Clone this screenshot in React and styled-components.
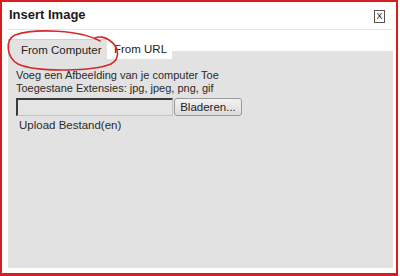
import React from "react";
import styled, { createGlobalStyle } from "styled-components";

const Global = createGlobalStyle`
  html, body { margin: 0; padding: 0; background: #ffffff; }
  body { font-family: "Liberation Sans", Arial, sans-serif; }
`;

const Frame = styled.div`
  position: relative;
  box-sizing: border-box;
  width: 398px;
  height: 276px;
  border: 2px solid #d81e1e;
  border-bottom-width: 3px;
  background: #ffffff;
  padding: 0 3px 0 6px;
  display: flex;
  flex-direction: column;
`;

const TitleBar = styled.div`
  height: 28px;
  box-sizing: border-box;
  border-bottom: 1px solid #e6e6e6;
  display: flex;
  align-items: flex-start;
  justify-content: space-between;
  padding: 5px 8px 0 1px;
`;

const Title = styled.div`
  font-size: 13px;
  font-weight: bold;
  color: #1a1a1a;
  line-height: 15px;
`;

const CloseBox = styled.div`
  box-sizing: border-box;
  width: 11px;
  height: 13px;
  margin-top: 3px;
  border: 1px solid #555;
  font-size: 9px;
  line-height: 11px;
  text-align: center;
  color: #222;
`;

const TabStrip = styled.div`
  display: flex;
  height: 20px;
  margin-top: 9px;
`;

const Tab = styled.div`
  box-sizing: border-box;
  width: ${(p) => p.$w}px;
  height: 20px;
  padding-left: ${(p) => p.$pl}px;
  font-size: 11.5px;
  line-height: 20px;
  color: #222;
  background: ${(p) => (p.$active ? "#e2e2e2" : "#ffffff")};
  border-top: ${(p) => (p.$active ? "1px solid #cfcfcf" : "none")};
`;

const TabFiller = styled.div`
  flex: 1;
  margin-top: 12px;
  background: #e2e2e2;
`;

const Panel = styled.div`
  height: 209px;
  background: #e2e2e2;
  padding: 10px 0 0 8px;
  box-sizing: border-box;
  font-size: 11px;
  color: #2a2a2a;
`;

const Line = styled.div`
  line-height: 13px;
  white-space: nowrap;
`;

const UploadRow = styled.div`
  display: flex;
  align-items: center;
  gap: 1px;
  margin-top: 3px;
`;

const FileInput = styled.div`
  box-sizing: border-box;
  width: 157px;
  height: 18px;
  border-top: 2px solid #3a3a3a;
  border-left: 2px solid #3a3a3a;
  border-right: 1px solid #c4c4c4;
  border-bottom: 1px solid #c4c4c4;
  background: #e4e4e4;
`;

const BrowseButton = styled.div`
  box-sizing: border-box;
  width: 68px;
  height: 18px;
  border: 1px solid #9a9a9a;
  border-radius: 3px;
  background: linear-gradient(#f2f2f2, #dcdcdc);
  font-size: 11.5px;
  line-height: 16px;
  text-align: center;
  color: #222;
`;

const UploadLabel = styled.div`
  margin-top: 3px;
  padding-left: 3px;
  line-height: 13px;
  font-size: 11.5px;
`;

const Scribble = styled.svg`
  position: absolute;
  left: -2px;
  top: -2px;
  pointer-events: none;
`;

export default function App() {
  return (
    <>
      <Global />
      <Frame>
        <TitleBar>
          <Title>Insert Image</Title>
          <CloseBox>X</CloseBox>
        </TitleBar>
        <TabStrip>
          <Tab $active $w={99} $pl={13}>From Computer</Tab>
          <Tab $w={65} $pl={7}>From URL</Tab>
          <TabFiller />
        </TabStrip>
        <Panel>
          <Line>Voeg een Afbeelding van je computer Toe</Line>
          <Line>Toegestane Extensies: jpg, jpeg, png, gif</Line>
          <UploadRow>
            <FileInput />
            <BrowseButton>Bladeren...</BrowseButton>
          </UploadRow>
          <UploadLabel>Upload Bestand(en)</UploadLabel>
        </Panel>
        <Scribble width="400" height="276" viewBox="0 0 400 276">
          <path
            d="M 100 41 C 80 30, 35 28, 15 35 C 5 40, 6 57, 18 64 C 38 73, 94 71, 111 64 C 120 59, 120 47, 109 40 C 105 37, 99 36, 95 38"
            fill="none"
            stroke="#d42a2a"
            strokeWidth="1.6"
            strokeLinecap="round"
          />
        </Scribble>
      </Frame>
    </>
  );
}
